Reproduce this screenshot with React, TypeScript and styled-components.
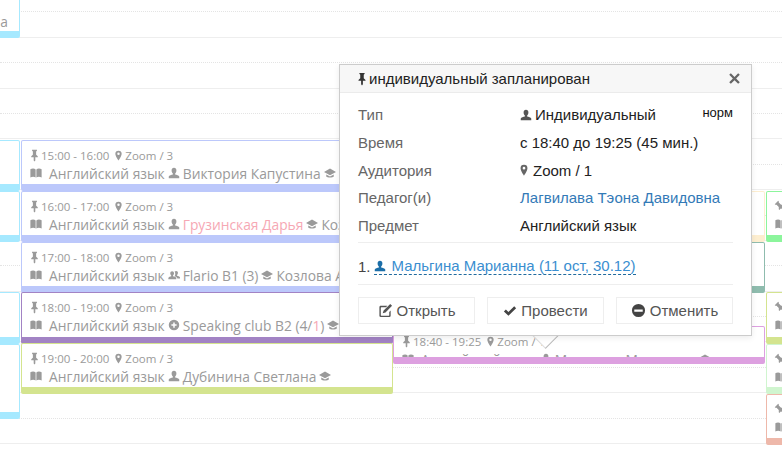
import styled, { createGlobalStyle } from 'styled-components'

const GlobalStyle = createGlobalStyle`
  html, body {
    margin: 0;
    height: 100%;
    overflow: hidden;
    background: #fff;
  }
`

const paths: Record<string, string> = {
  pin: 'M5 1h6v1l-1 1v4l2 2v1H9v4l-1 1.500-1-1.500v-4H4V9l2-2V3L5 2z',
  marker: 'M8 1a4.600 4.600 0 0 0-4.600 4.600C3.400 9 8 15.500 8 15.500s4.600-6.500 4.600-9.900A4.600 4.600 0 0 0 8 1zm0 2.800a1.800 1.800 0 1 1 0 3.600 1.800 1.800 0 0 1 0-3.600z',
  book: 'M.5 3C2.500 1.800 6 1.800 7.500 3.200V14C6 12.800 2.500 12.800.5 14zM8.500 3.200C10 1.800 13.500 1.800 15.500 3v11c-2-1.200-5.500-1.200-7 0z',
  user: 'M8 1c2 0 3.200 1.500 3.200 3.600 0 1.800-.8 3.200-1.700 4V10c2 .5 5 1.300 5.500 2.800V15H1v-2.200C1.500 11.300 4.500 10.500 6.500 10V8.600c-.9-.8-1.700-2.200-1.700-4C4.800 2.500 6 1 8 1z',
  group: 'M5.500 3c1.500 0 2.500 1.200 2.500 2.800 0 1.300-.6 2.400-1.300 3v1c1.500.4 3.800 1 4.300 2.200v1.500H.500v-1.500C1 10.800 2.800 10.200 4.300 9.800v-1C3.600 8.200 3 7.100 3 5.800 3 4.200 4 3 5.500 3zM11 2.500c1.400 0 2.300 1.100 2.300 2.600 0 1.200-.5 2.200-1.200 2.800v1c1.300.3 3.300.9 3.900 2v1.600h-3.500c-.5-1.500-2.200-2.400-3.800-2.900.6-.8 1-1.900 1-3 0-1.200-.3-2.300-.9-3.200.6-.6 1.300-.9 2.200-.9z',
  hat: 'M8 2 0 6.500l8 4.500 8-4.500zM3 10v2.800c1.500 1.700 8.500 1.700 10 0V10l-5 2.800z',
  plus: 'M8 1a7 7 0 1 0 0 14A7 7 0 0 0 8 1zM7 4.500h2V7h2.500v2H9v2.500H7V9H4.500V7H7z',
  minus: 'M8 1a7 7 0 1 0 0 14A7 7 0 0 0 8 1zM3.500 6.800h9v2.400h-9z',
  ok: 'M1 8.500 3.300 6.200 6.200 9.100 12.800 2.500 15 4.800 6.200 13.500z',
  remove: 'M3.500 1.500 8 6l4.500-4.500 2 2L10 8l4.500 4.500-2 2L8 10l-4.500 4.500-2-2L6 8 1.500 3.500z',
  edit: 'M2.500 3H10L8.500 4.500h-5a.5.5 0 0 0-.5.5v8a.5.5 0 0 0 .5.5h8a.5.5 0 0 0 .5-.5V9.500L13.500 8v5.500A1.500 1.500 0 0 1 12 15H3a1.500 1.500 0 0 1-1.500-1.500v-9A1.500 1.500 0 0 1 2.500 3zM13 1l2 2-7 7-3 1 1-3z',
}

const Glyph = styled.svg<{ $size: number; $color?: string; $nudge?: number; $tilt?: boolean }>`
  flex: none;
  width: ${({ $size }) => $size}px;
  height: ${({ $size }) => $size}px;
  margin-left: ${({ $nudge }) => $nudge || 0}px;
  fill: ${({ $color }) => $color || 'currentColor'};
  transform: ${({ $tilt }) => ($tilt ? 'rotate(-45deg)' : 'none')};
`

type IconProps = { name: string; size?: number; color?: string; nudge?: number; tilt?: boolean }

const Icon = ({ name, size = 12, color, nudge, tilt }: IconProps) => (
  <Glyph viewBox="0 0 16 16" $size={size} $color={color} $nudge={nudge} $tilt={tilt}>
    <path d={paths[name]} fillRule="evenodd" />
  </Glyph>
)

const Page = styled.div`
  position: relative;
  width: 782px;
  height: 462px;
  overflow: hidden;
`

const Grid = styled.div`
  display: flex;
  flex-direction: column;
  margin-top: -13px;
`

const Slot = styled.div<{ $solid: boolean }>`
  height: 25.4px;
  box-sizing: border-box;
  flex: none;
  border-bottom: 1px ${({ $solid }) => ($solid ? 'solid #eee' : 'dotted #e4e4e4')};
`

const EventBox = styled.div<{ $left: number; $top: number; $width: number; $height: number; $color: string }>`
  position: absolute;
  left: ${({ $left }) => $left}px;
  top: ${({ $top }) => $top}px;
  width: ${({ $width }) => $width}px;
  height: ${({ $height }) => $height}px;
  box-sizing: border-box;
  background: #fff;
  border: 1px solid ${({ $color }) => $color};
  border-bottom-width: 7px;
  border-radius: 2px;
  padding: 6px 0 0 8px;
  overflow: hidden;
  color: #9a9a9a;
  font-family: "Open Sans", sans-serif;
  white-space: nowrap;
`

const TimeRow = styled.div`
  display: flex;
  align-items: center;
  height: 17px;
  font-size: 11.5px;
`

const Place = styled.span`
  display: inline-flex;
  align-items: center;
  margin-left: 4px;
  gap: 1px;
`

const InfoRow = styled.div`
  display: flex;
  align-items: center;
  height: 18px;
  font-size: 13.8px;
  gap: 3px;
`

const Subject = styled.span`
  margin-left: 4px;
`

const Late = styled.span`
  color: #f6a8b4;
`

const Tail = styled.div`
  display: flex;
  justify-content: flex-end;
  padding: 26px 11px 0 0;
  font-size: 13.8px;
  line-height: 18px;
`

const Popup = styled.div`
  position: absolute;
  left: 339px;
  top: 64px;
  width: 413px;
  height: 272px;
  box-sizing: border-box;
  background: #fff;
  border: 1px solid #ccc;
  box-shadow: 0 2px 6px rgba(0, 0, 0, 0.08);
  font-family: "Liberation Sans", Arial, sans-serif;
  font-size: 15px;
  color: #222;
`

const Arrow = styled.div`
  position: absolute;
  left: 536px;
  top: 326px;
  width: 18px;
  height: 18px;
  background: #fff;
  border-right: 1px solid #bbb;
  border-bottom: 1px solid #ddd;
  transform: rotate(45deg);
`

const Header = styled.div`
  display: flex;
  align-items: center;
  height: 27px;
  padding: 0 10px 0 18px;
  background: #f7f7f7;
  border-bottom: 1px solid #ebebeb;
  color: #222;
`

const Title = styled.span`
  flex: 1;
`

const Body = styled.div`
  padding: 8px 18px 0;
`

const Field = styled.div`
  display: grid;
  grid-template-columns: 162px 1fr auto;
  align-items: center;
  height: 27.7px;
`

const Label = styled.span`
  color: #666;
`

const Value = styled.span`
  display: flex;
  align-items: center;
  gap: 3px;
  color: #222;
`

const Teacher = styled.a`
  color: #337ab7;
`

const Norm = styled.span`
  font-size: 13px;
  color: #111;
  margin-bottom: 4px;
`

const Divider = styled.div<{ $gap: number }>`
  height: 1px;
  background: #eee;
  margin-top: ${({ $gap }) => $gap}px;
`

const Student = styled.div`
  display: flex;
  align-items: center;
  box-sizing: border-box;
  height: 41px;
  padding-top: 5px;
  color: #444;
  gap: 3px;
`

const StudentLink = styled.a`
  display: inline-flex;
  align-items: center;
  gap: 6px;
  color: #3a8ed0;
  border-bottom: 1px dashed #1f6a9e;
  line-height: 16px;
`

const Actions = styled.div`
  display: grid;
  grid-template-columns: repeat(3, 117px);
  gap: 12px;
  margin-top: 12px;
`

const ActionButton = styled.button`
  display: flex;
  align-items: center;
  justify-content: center;
  gap: 4px;
  height: 27px;
  padding: 0;
  background: #fff;
  border: 1px solid #eee;
  font: inherit;
  color: #555;
`

const slots = Array.from({ length: 18 }, (_, i) => i % 2 === 1)

type LessonProps = {
  left: number
  top: number
  height?: number
  color: string
  time: string
  room?: string
  kind?: string
  who: React.ReactNode
  teacher?: string
}

const Lesson = ({ left, top, height = 51, color, time, room = 'Zoom / 3', kind = 'user', who, teacher }: LessonProps) => (
  <EventBox $left={left} $top={top} $width={372} $height={height} $color={color}>
    <TimeRow>
      <Icon name="pin" size={13} nudge={-2} />
      {time}
      <Place>
        <Icon name="marker" size={11} />
        {room}
      </Place>
    </TimeRow>
    <InfoRow>
      <Icon name="book" />
      <Subject>Английский язык</Subject>
      <Icon name={kind} />
      {who}
      <Icon name="hat" />
      {teacher}
    </InfoRow>
  </EventBox>
)

const Narrow = ({ top, height, color }: { top: number; height: number; color: string }) => (
  <EventBox $left={766} $top={top} $width={30} $height={height} $color={color}>
    <TimeRow>
      <Icon name="pin" size={13} nudge={-1} tilt />
    </TimeRow>
    <InfoRow>
      <Icon name="book" />
    </InfoRow>
  </EventBox>
)

const Side = ({ top, height = 51, color }: { top: number; height?: number; color: string }) => (
  <EventBox $left={-352} $top={top} $width={372} $height={height} $color={color} />
)

export default function App() {
  return (
    <Page>
      <GlobalStyle />
      <Grid>
        {slots.map((solid, i) => (
          <Slot key={i} $solid={solid} />
        ))}
      </Grid>

      <EventBox $left={-352} $top={-20} $width={372} $height={58} $color="#a6e9ff">
        <Tail>на</Tail>
      </EventBox>
      <Side top={140} color="#a6e9ff" />
      <Side top={191} color="#a6e9ff" />
      <Side top={292} height={52} color="#a6e9ff" />
      <Side top={344} height={75} color="#a6e9ff" />

      <EventBox $left={393} $top={191} $width={372} $height={51} $color="#fdeed0" />
      <EventBox $left={393} $top={242} $width={372} $height={51} $color="#8fbcae" />
      <Lesson left={393} top={326} height={38} color="#dda0e0" time="18:40 - 19:25" room="Zoom / 1" who="Мальгина Марианна" />

      <Lesson left={21} top={140} color="#bcc8fb" time="15:00 - 16:00" who="Виктория Капустина" />
      <Lesson left={21} top={191} color="#bcc8fb" time="16:00 - 17:00" who={<Late>Грузинская Дарья</Late>} teacher="Козлова" />
      <Lesson left={21} top={242} color="#bcc8fb" time="17:00 - 18:00" kind="group" who="Flario B1 (3)" teacher="Козлова А" />
      <Lesson left={21} top={292} height={52} color="#a283c4" time="18:00 - 19:00" kind="plus" who={<span>Speaking club B2 (4/<Late>1</Late>)</span>} />
      <Lesson left={21} top={343} color="#d4e48f" time="19:00 - 20:00" who="Дубинина Светлана" />

      <Narrow top={191} height={51} color="#8cf59c" />
      <Narrow top={292} height={52} color="#d4e48f" />
      <Narrow top={344} height={50} color="#d0f5cf" />
      <Narrow top={394} height={51} color="#eeb8aa" />

      <Arrow />
      <Popup>
        <Header>
          <Icon name="pin" size={14} color="#333" nudge={-3} />
          <Title>индивидуальный запланирован</Title>
          <Icon name="remove" size={13} color="#666" />
        </Header>
        <Body>
          <Field>
            <Label>Тип</Label>
            <Value><Icon name="user" size={12} color="#555" />Индивидуальный</Value>
            <Norm>норм</Norm>
          </Field>
          <Field>
            <Label>Время</Label>
            <Value>с 18:40 до 19:25 (45 мин.)</Value>
          </Field>
          <Field>
            <Label>Аудитория</Label>
            <Value><Icon name="marker" size={12} color="#666" nudge={-2} />Zoom / 1</Value>
          </Field>
          <Field>
            <Label>Педагог(и)</Label>
            <Value><Teacher>Лагвилава Тэона Давидовна</Teacher></Value>
          </Field>
          <Field>
            <Label>Предмет</Label>
            <Value>Английский язык</Value>
          </Field>
          <Divider $gap={3} />
          <Student>
            1.
            <StudentLink>
              <Icon name="user" size={12} color="#1b6ea8" />
              Мальгина Марианна (11 ост, 30.12)
            </StudentLink>
          </Student>
          <Divider $gap={0} />
          <Actions>
            <ActionButton><Icon name="edit" size={15} color="#555" />Открыть</ActionButton>
            <ActionButton><Icon name="ok" size={14} color="#444" />Провести</ActionButton>
            <ActionButton><Icon name="minus" size={15} color="#444" />Отменить</ActionButton>
          </Actions>
        </Body>
      </Popup>
    </Page>
  )
}
